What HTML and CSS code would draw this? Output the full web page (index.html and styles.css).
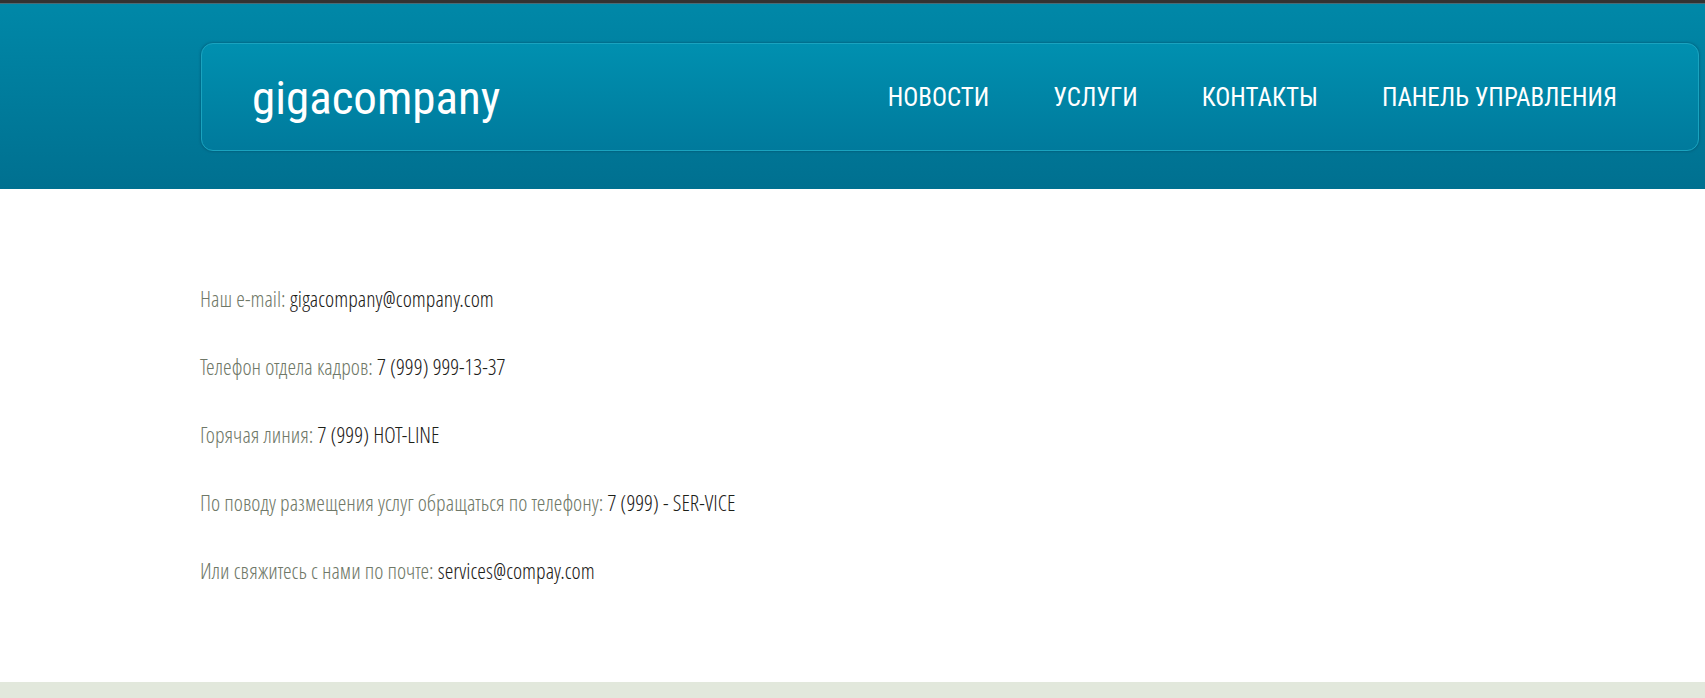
FILE: index.html
```html
<!DOCTYPE html>
<html lang="ru">
<head>
<meta charset="utf-8">
<title>gigacompany</title>
<link rel="stylesheet" href="styles.css">
</head>
<body>
<header class="header">
  <div class="panel">
    <a class="logo" href="#">gigacompany</a>
    <nav class="menu">
      <a class="menu-link" href="#">НОВОСТИ</a>
      <a class="menu-link" href="#">УСЛУГИ</a>
      <a class="menu-link" href="#">КОНТАКТЫ</a>
      <a class="menu-link" href="#">ПАНЕЛЬ УПРАВЛЕНИЯ</a>
    </nav>
  </div>
</header>
<main class="contacts">
  <p class="contact">Наш e-mail: <span class="value">gigacompany@company.com</span></p>
  <p class="contact">Телефон отдела кадров: <span class="value">7 (999) 999-13-37</span></p>
  <p class="contact">Горячая линия: <span class="value">7 (999) HOT-LINE</span></p>
  <p class="contact">По поводу размещения услуг обращаться по телефону: <span class="value">7 (999) - SER-VICE</span></p>
  <p class="contact">Или свяжитесь с нами по почте: <span class="value">services@compay.com</span></p>
</main>
<footer class="footer"></footer>
</body>
</html>
```
FILE: styles.css
```css
* {
  box-sizing: border-box;
}

body {
  display: flex;
  flex-direction: column;
  min-height: 100vh;
  margin: 0;
  background: #fff;
  font-family: "Ubuntu Condensed", "Open Sans Condensed Light", "Open Sans Condensed", "Roboto Condensed", sans-serif;
  font-weight: 300;
}

.header {
  padding: 40px 6px 38px 201px;
  border-top: 3px solid #333;
  background: linear-gradient(#0088a8, #007090);
  box-shadow: inset 0 1px #4a6b76;
  font-family: "Ubuntu Condensed", "Roboto Condensed", "Open Sans Condensed", sans-serif;
}

.panel {
  display: flex;
  align-items: center;
  justify-content: space-between;
  min-height: 108px;
  padding: 2px 81px 0 50px;
  border: 1px solid #1aa3bf;
  border-radius: 12px;
  background: linear-gradient(#0090b0, #007a9c);
  box-shadow: 0 0 3px #00506c;
}

.logo {
  color: #fff;
  font-size: 47px;
  font-weight: 400;
  line-height: 60px;
  text-decoration: none;
}

.menu {
  display: flex;
  gap: 64px;
}

.menu-link {
  color: #fff;
  font-size: 25px;
  font-weight: 400;
  line-height: 36px;
  text-decoration: none;
}

.contacts {
  padding: 75px 200px 78px;
}

.contact {
  margin: 0;
  color: #6f7868;
  font-size: 22px;
  line-height: 68px;
}

.value {
  color: #1c2018;
}

.footer {
  flex: 1;
  min-height: 16px;
  background: #e2e8dc;
}
```
